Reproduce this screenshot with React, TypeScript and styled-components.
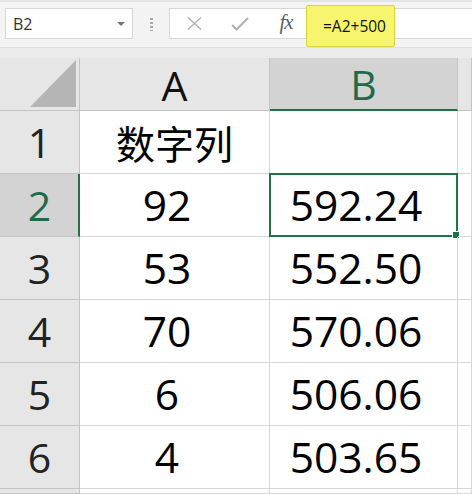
import React from "react";
import styled, { createGlobalStyle } from "styled-components";

const Global = createGlobalStyle`
  html, body { margin: 0; padding: 0; background: #ffffff; overflow: hidden; }
  body { font-family: "Open Sans", "Noto Sans CJK SC", sans-serif; }
`;

const Page = styled.div`
  width: 472px;
  height: 494px;
  overflow: hidden;
  display: flex;
  flex-direction: column;
  background: #fff;
`;

const Toolbar = styled.div`
  height: 45px;
  flex: none;
  border-top: 2px solid #e4e4e4;
  background: #f3f3f3;
  display: flex;
  align-items: center;
  padding-left: 5px;
  position: relative;
`;

const Spacer = styled.div`
  height: 10px;
  flex: none;
  background: #ebebeb;
  border-top: 1px solid #e0e0e0;
`;

const NameBox = styled.div`
  height: 29px;
  margin-top: -2px;
  background: #fff;
  border: 1px solid #d6d6d6;
  display: flex;
  align-items: center;
  justify-content: space-between;
  padding: 0 7px 0 7px;
  box-sizing: content-box;
  width: 112px;
  font-family: "Open Sans", sans-serif;
  font-size: 16px;
  color: #333;
`;

const Caret = styled.span`
  width: 0;
  height: 0;
  border-left: 4px solid transparent;
  border-right: 4px solid transparent;
  border-top: 4px solid #777;
`;

const Grip = styled.div`
  width: 3px;
  height: 14px;
  margin: -2px 16px 0 17px;
  background-image: radial-gradient(circle, #a8a8a8 1.3px, transparent 1.4px);
  background-size: 3px 4px;
`;

const FormulaBox = styled.div`
  flex: 1;
  height: 29px;
  margin-top: -2px;
  background: #fff;
  border: 1px solid #d6d6d6;
  border-right: none;
  display: flex;
  align-items: center;
  padding-left: 14px;
  gap: 26px;
`;

const IconBtn = styled.span`
  display: flex;
  align-items: center;
  justify-content: center;
  width: 20px;
  height: 20px;
`;

const Fx = styled.span`
  font-family: "Liberation Serif", serif;
  font-style: italic;
  font-size: 21px;
  color: #5f5f5f;
  letter-spacing: -1px;
  margin-top: -2px;
`;

const Highlight = styled.div`
  position: absolute;
  left: 306px;
  top: 3px;
  width: 89px;
  height: 42px;
  background: #f7f56e;
  border: 1px solid #dcd437;
  border-radius: 2px;
  box-sizing: border-box;
  display: flex;
  align-items: center;
  padding-left: 16px;
  font-family: "Open Sans", sans-serif;
  font-size: 15.5px;
  color: #111;
`;

const Sheet = styled.div`
  display: grid;
  grid-template-columns: 80px 190px 188px 1fr;
  grid-template-rows: 53px repeat(6, 63px) 1fr;
  flex: 1;
`;

const Corner = styled.div`
  background: #e6e6e6;
  border-right: 1px solid #c4c4c4;
  border-bottom: 1px solid #c4c4c4;
  position: relative;
  display: flex;
  justify-content: flex-end;
  align-items: flex-end;
  padding: 0 3px 3px 0;
`;

const ColHead = styled.div<{ $sel?: boolean }>`
  background: ${(p) => (p.$sel ? "#d3d3d3" : "#e6e6e6")};
  border-right: 1px solid #c4c4c4;
  border-bottom: ${(p) => (p.$sel ? "2px solid #217346" : "1px solid #c4c4c4")};
  display: flex;
  align-items: center;
  justify-content: center;
  font-family: "Open Sans", sans-serif;
  font-size: 41px;
  line-height: 1;
  padding-top: 2px;
  color: ${(p) => (p.$sel ? "#1e6b4a" : "#111")};
`;

const RowHead = styled.div<{ $sel?: boolean }>`
  background: ${(p) => (p.$sel ? "#d3d3d3" : "#e6e6e6")};
  border-right: ${(p) => (p.$sel ? "2px solid #217346" : "1px solid #c4c4c4")};
  border-bottom: 1px solid #c4c4c4;
  display: flex;
  align-items: center;
  justify-content: center;
  font-family: "Open Sans", sans-serif;
  font-size: 41px;
  line-height: 1;
  color: ${(p) => (p.$sel ? "#1e6b4a" : "#222")};
  padding-left: ${(p) => (p.$sel ? "1px" : "0")};
`;

const Cell = styled.div<{ $num?: boolean; $cjk?: boolean }>`
  position: relative;
  border-right: 1px solid #d6d6d6;
  border-bottom: 1px solid #d6d6d6;
  display: flex;
  align-items: center;
  justify-content: center;
  padding-right: ${(p) => (p.$num ? "15px" : "0")};
  font-family: ${(p) =>
    p.$cjk ? '"Noto Sans CJK SC", sans-serif' : '"Open Sans", sans-serif'};
  font-size: ${(p) => (p.$cjk ? "39px" : "42.5px")};
  line-height: 1;
  color: #000;
`;

const Selection = styled.div`
  position: absolute;
  left: -1px;
  top: -1px;
  right: -1px;
  bottom: -1px;
  border: 2px solid #217346;
  pointer-events: none;
`;

const Handle = styled.div`
  position: absolute;
  right: -4px;
  bottom: -4px;
  width: 6px;
  height: 6px;
  background: #217346;
  border: 1px solid #fff;
`;

const rows: [string, string, string][] = [
  ["1", "数字列", ""],
  ["2", "92", "592.24"],
  ["3", "53", "552.50"],
  ["4", "70", "570.06"],
  ["5", "6", "506.06"],
  ["6", "4", "503.65"],
];

export default function App() {
  return (
    <Page>
      <Global />
      <Toolbar>
        <NameBox>
          <span>B2</span>
          <Caret />
        </NameBox>
        <Grip />
        <FormulaBox>
          <IconBtn>
            <svg width="15" height="13" viewBox="0 0 15 13">
              <path d="M1 0.5 L14 12.5 M14 0.5 L1 12.5" stroke="#b0b0b0" strokeWidth="1.4" fill="none" />
            </svg>
          </IconBtn>
          <IconBtn>
            <svg width="18" height="14" viewBox="0 0 18 14">
              <path d="M1 8 L5.5 12.5 L17 1" stroke="#b0b0b0" strokeWidth="2" fill="none" />
            </svg>
          </IconBtn>
          <IconBtn>
            <Fx>fx</Fx>
          </IconBtn>
        </FormulaBox>
        <Highlight>=A2+500</Highlight>
      </Toolbar>
      <Spacer />
      <Sheet>
        <Corner>
          <svg width="46" height="47" viewBox="0 0 46 47">
            <path d="M0 47 L46 47 L46 0 Z" fill="#b5b5b5" />
          </svg>
        </Corner>
        <ColHead>A</ColHead>
        <ColHead $sel>B</ColHead>
        <ColHead />
        {rows.map(([r, a, b]) => (
          <React.Fragment key={r}>
            <RowHead $sel={r === "2"}>{r}</RowHead>
            <Cell $num={r !== "1"} $cjk={r === "1"}>
              {a}
            </Cell>
            <Cell $num>
              {b}
              {r === "2" && (
                <Selection>
                  <Handle />
                </Selection>
              )}
            </Cell>
            <Cell />
          </React.Fragment>
        ))}
        <RowHead />
        <Cell />
        <Cell />
        <Cell />
      </Sheet>
    </Page>
  );
}
